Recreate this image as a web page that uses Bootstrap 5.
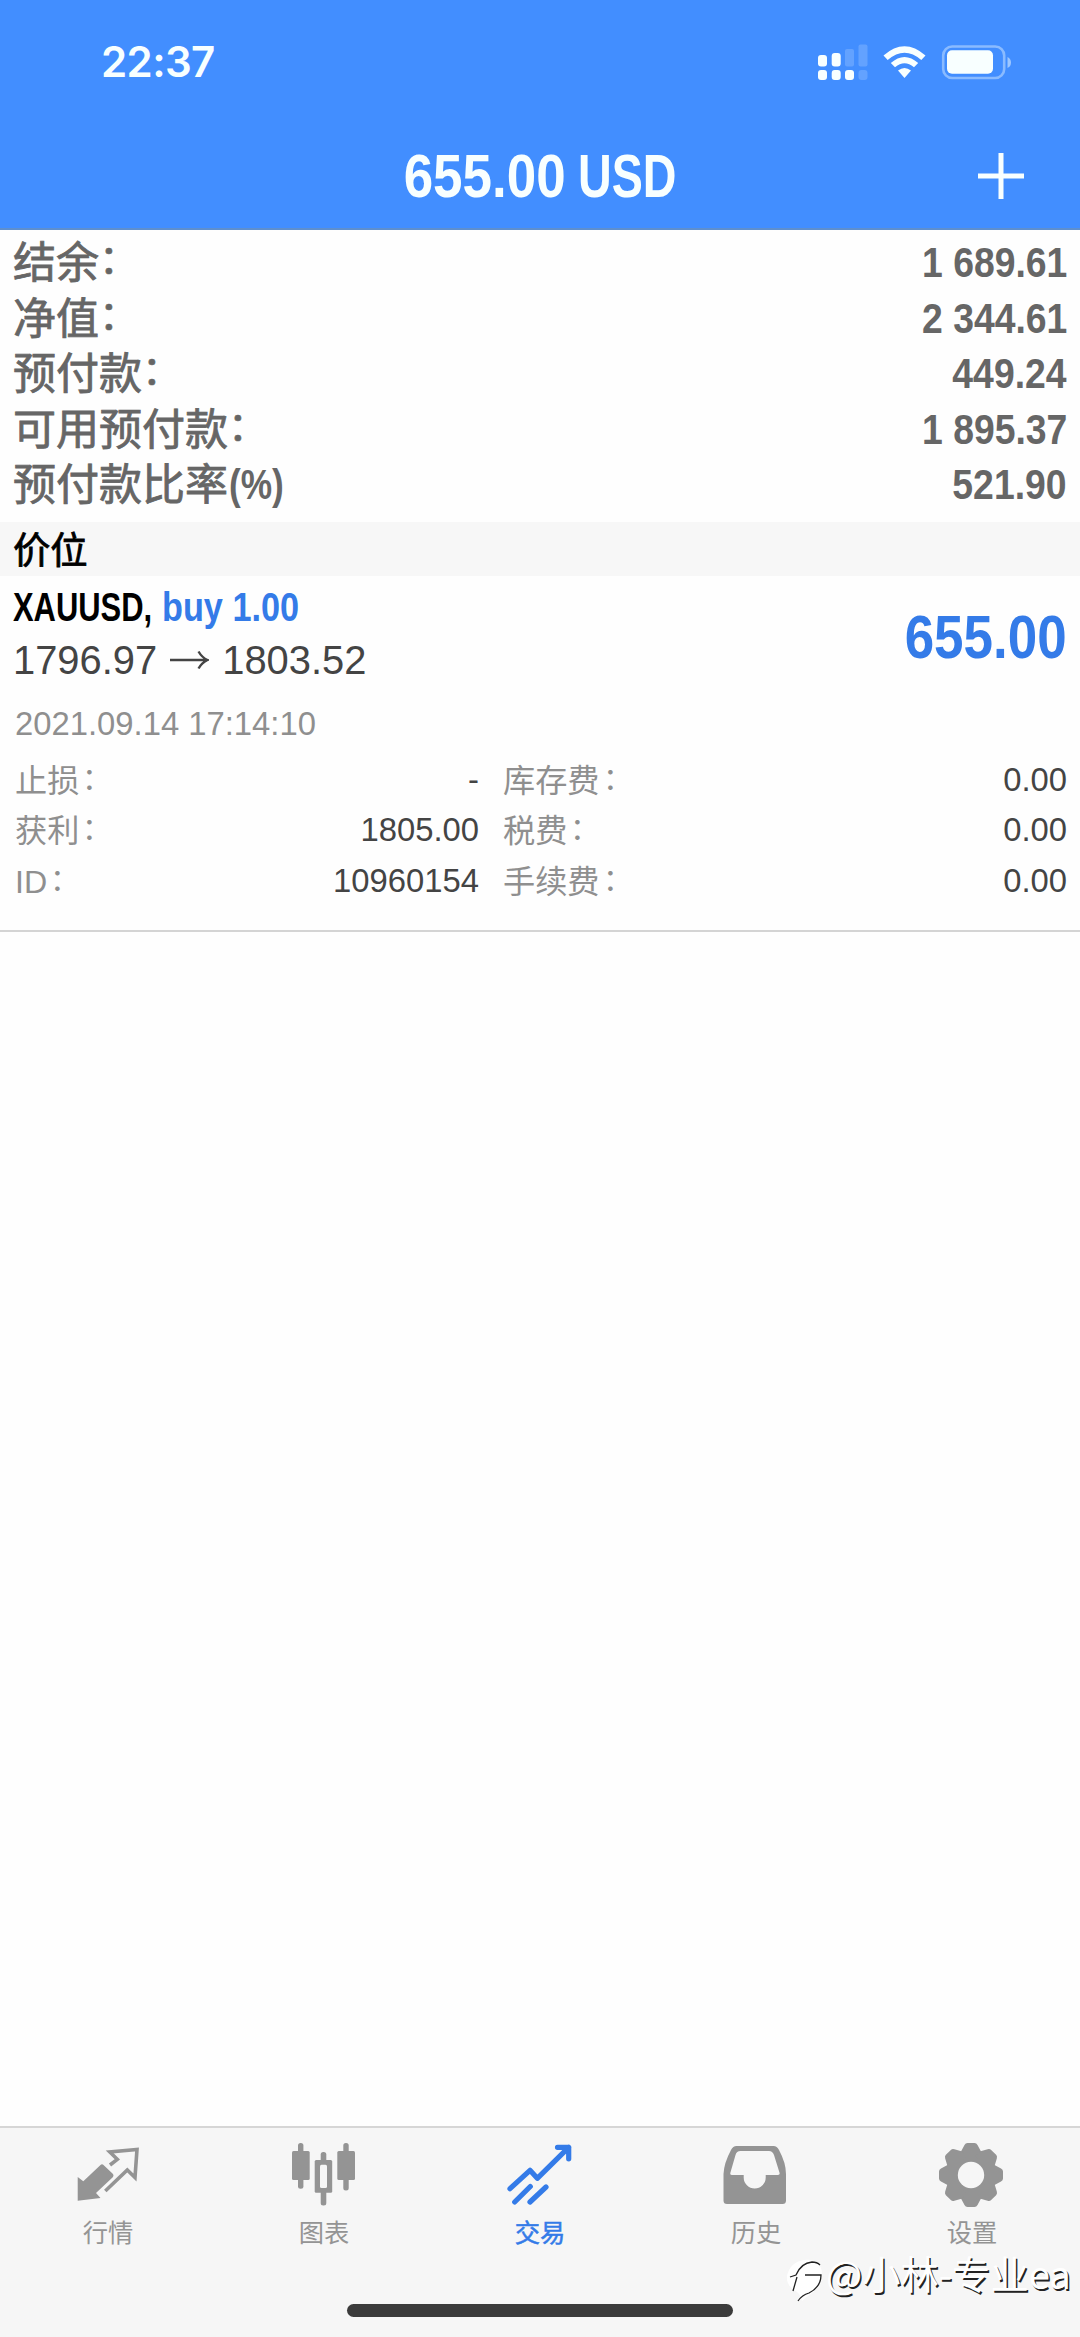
<!DOCTYPE html>
<html lang="zh-CN">
<head>
<meta charset="utf-8">
<meta name="viewport" content="width=device-width, initial-scale=1">
<title>交易</title>
<link href="https://cdn.jsdelivr.net/npm/bootstrap@5.3.0/dist/css/bootstrap.min.css" rel="stylesheet">
<style>
  body { font-family: "Liberation Sans", "Noto Sans CJK SC", sans-serif; background: #fefefe; color: #444; }
  .screen { width: 1080px; height: 2337px; overflow: hidden; }
  svg { display: block; }
  .app-head { height: 230px; background: #428eff; border-bottom: 2px solid #5e8fce; color: #f8ffff; }
  .status-line { height: 123px; padding: 0 69px 0 101px; }
  .clock { font: 600 42px/123px Inter, sans-serif; letter-spacing: -.6px; }
  .title-line { height: 105px; padding: 0 56px 0 0; }
  .title-side { width: 108px; }
  .title-main { font-size: 61px; line-height: 106px; gap: 13px; }
  .squeeze { display: inline-block; font-weight: 700; white-space: pre; transform: scaleX(.868); transform-origin: right; }
  .squeeze-l { transform-origin: left; }
  .narrow { transform: scaleX(.745); }
  .title-main .narrow { transform: scaleX(.765); }
  .lots { transform: scaleX(.825); margin-left: 1px; }
  .pct { transform: scaleX(.82); margin-left: 1px; }
  .totals { padding: 5px 13px 9px; color: #666; font-size: 43px; }
  .totals .line { height: 55.6px; line-height: 55.6px; }
  .label-bold { -webkit-text-stroke: .8px currentColor; }
  .totals .label-bold { padding-top: 1px; }
  .colon { display: inline-block; transform: translateY(-.08em) scale(.92); transform-origin: left center; }
  .band { height: 54px; background: #f7f7f7; color: #000; font-size: 37.3px; line-height: 58px; padding-left: 13px; }
  .deal { height: 356px; padding: 4px 13px 0; border-bottom: 2px solid #d4d4d4; }
  .deal-name { font-size: 41.5px; line-height: 53px; height: 53px; color: #000; }
  .deal-name .sym { width: 148px; }
  .blue { color: #347be8; }
  .deal-price { font-size: 39.9px; line-height: 54px; height: 54px; gap: 13px; }
  .profit { font-size: 61px; line-height: 70px; padding-top: 7px; }
  .deal-date { font-size: 32.8px; line-height: 54px; margin-top: 10px; padding-left: 2px; color: #8f8f8f; }
  .details { margin-top: 4px; font-size: 32.8px; line-height: 50.5px; }
  .details .tag { color: #8f8f8f; font-size: 32.2px; padding-top: 1px; margin-bottom: -1px; }
  .details .colon { margin-left: 3px; }
  .col-l { width: 466px; padding-left: 2px; }
  .col-r { margin-left: 24px; }
  .tabs { height: 211px; background: #f6f6f6; border-top: 2px solid #d6d6d6; color: #949494; }
  .tab { padding-top: 11px; width: 216px; }
  .tab-name { font-size: 25.3px; line-height: 36px; margin-top: 4px; }
  .tab-on { -webkit-text-stroke: .5px currentColor; }
  .home-bar { left: 347px; top: 2304px; width: 386px; height: 13px; border-radius: 7px; background: #3b3b3b; }
  .stamp { left: 785px; top: 2245px; height: 58px; color: #fff; font-family: "Noto Sans CJK SC", sans-serif; font-size: 38.3px; line-height: 56px; white-space: nowrap; text-shadow: 1.5px 1.5px 0 #222; }
</style>
</head>
<body>
<div class="screen position-relative d-flex flex-column">
  <header class="app-head flex-shrink-0">
    <div class="status-line d-flex justify-content-between align-items-center">
      <span class="clock">22:37</span>
      <svg width="193" height="36" viewBox="818 43 193 36" fill="#f8ffff">
        <g><rect x="818" y="54" width="9" height="11.500" rx="3"/><rect x="831.700" y="52" width="9" height="13.500" rx="3"/>
        <rect x="818" y="69" width="9" height="10" rx="3"/><rect x="831.700" y="69" width="9" height="10" rx="3"/><rect x="845" y="69" width="9" height="10" rx="3"/></g>
        <g opacity=".18"><rect x="845" y="48" width="9" height="17.500" rx="2"/><rect x="858.500" y="43.500" width="9" height="22" rx="2"/><rect x="858.500" y="69" width="9" height="10" rx="3"/></g>
        <path d="M883.500 54.500Q904.500 36 925.500 54.500L921.300 59Q904.500 44.500 887.700 59Z"/>
        <path d="M890.800 62Q904.500 50 918.200 62L914 66.300Q904.500 58 895 66.300Z"/>
        <path d="M898 69.500Q904.500 64.500 911 69.500L904.500 77Z"/>
        <rect x="943.200" y="45.500" width="61" height="31.500" rx="9" fill="none" stroke="#f8ffff" stroke-opacity=".4" stroke-width="2.600"/>
        <rect x="947" y="49.300" width="46" height="23.500" rx="5"/>
        <path d="M1007.500 56Q1011 57.500 1011 61.500T1007.500 67Z" opacity=".5"/>
      </svg>
    </div>
    <div class="title-line d-flex justify-content-between align-items-center">
      <div class="title-side"></div>
      <div class="title-main d-flex"><span class="squeeze">655.00</span><span class="squeeze squeeze-l narrow">USD</span></div>
      <svg width="46" height="46" viewBox="0 0 46 46" stroke="#f8ffff" stroke-width="5"><path d="M23 0V46M0 23H46"/></svg>
    </div>
  </header>

  <section class="totals flex-shrink-0">
    <div class="line d-flex justify-content-between"><span class="label-bold">结余<span class="colon">：</span></span><span class="squeeze">1 689.61</span></div>
    <div class="line d-flex justify-content-between"><span class="label-bold">净值<span class="colon">：</span></span><span class="squeeze">2 344.61</span></div>
    <div class="line d-flex justify-content-between"><span class="label-bold">预付款<span class="colon">：</span></span><span class="squeeze">449.24</span></div>
    <div class="line d-flex justify-content-between"><span class="label-bold">可用预付款<span class="colon">：</span></span><span class="squeeze">1 895.37</span></div>
    <div class="line d-flex justify-content-between"><span class="d-flex"><span class="label-bold">预付款比率</span><span class="squeeze squeeze-l pct">(%)</span></span><span class="squeeze">521.90</span></div>
  </section>

  <div class="band flex-shrink-0"><span class="label-bold">价位</span></div>

  <section class="deal flex-shrink-0">
    <div class="d-flex justify-content-between align-items-center">
      <div>
        <div class="deal-name d-flex"><span class="sym"><span class="squeeze squeeze-l narrow">XAUUSD,</span></span><span class="squeeze squeeze-l lots blue">buy 1.00</span></div>
        <div class="deal-price d-flex align-items-center"><span>1796.97</span>
          <svg width="39" height="20" viewBox="0 0 39 20" fill="none" stroke="#444" stroke-width="2.400"><path d="M0 10H37M28.500 1.500Q32 7.500 37.500 10Q32 12.500 28.500 18.500"/></svg>
          <span>1803.52</span></div>
      </div>
      <div class="profit"><span class="squeeze blue">655.00</span></div>
    </div>
    <div class="deal-date">2021.09.14 17:14:10</div>
    <div class="details d-flex">
      <div class="col-l">
        <div class="d-flex justify-content-between"><span class="tag">止损<span class="colon">：</span></span><span>-</span></div>
        <div class="d-flex justify-content-between"><span class="tag">获利<span class="colon">：</span></span><span>1805.00</span></div>
        <div class="d-flex justify-content-between"><span class="tag">ID<span class="colon">：</span></span><span>10960154</span></div>
      </div>
      <div class="col-r flex-grow-1">
        <div class="d-flex justify-content-between"><span class="tag">库存费<span class="colon">：</span></span><span>0.00</span></div>
        <div class="d-flex justify-content-between"><span class="tag">税费<span class="colon">：</span></span><span>0.00</span></div>
        <div class="d-flex justify-content-between"><span class="tag">手续费<span class="colon">：</span></span><span>0.00</span></div>
      </div>
    </div>
  </section>

  <nav class="tabs d-flex mt-auto flex-shrink-0">
    <div class="tab d-flex flex-column align-items-center">
      <svg width="72" height="72" viewBox="0 0 72 72" fill="#949494"><path d="M5.700 38L11.300 42.300L28.500 26Q30 24.500 31.500 26L41 35Q42 36.500 41 38L24 54L28.500 59L5.700 61.700Z"/><path d="M38 26L45.300 20.300L37.800 13L65 10.500L63 38.500L55.300 31L33.300 52" fill="none" stroke="#949494" stroke-width="3.600"/></svg>
      <span class="tab-name">行情</span>
    </div>
    <div class="tab d-flex flex-column align-items-center">
      <svg width="72" height="72" viewBox="0 0 72 72" fill="#949494"><rect x="4" y="12" width="17.700" height="29" rx="1.500"/><rect x="10" y="4" width="5.400" height="45.700" rx="2.500"/><rect x="49.300" y="12" width="17.700" height="29" rx="1.500"/><rect x="55.300" y="4" width="5.400" height="47.500" rx="2.500"/><rect x="32.700" y="13" width="5.600" height="53.500" rx="2.500"/><rect x="26.700" y="21" width="17.500" height="32.700" rx="1.500"/><rect x="32" y="25.700" width="7" height="23.300" rx="1.500" fill="#f6f6f6"/></svg>
      <span class="tab-name">图表</span>
    </div>
    <div class="tab d-flex flex-column align-items-center blue">
      <svg width="72" height="72" viewBox="0 0 72 72" fill="none" stroke="#347be8" stroke-width="5.200" stroke-linecap="round" stroke-linejoin="round"><path d="M6 49.700L26 31.300L33.300 39.300L64.700 8.300M53.500 8.300H64.700V19.800M10.700 63L26.300 47.500M26 63L42 48"/></svg>
      <span class="tab-name tab-on">交易</span>
    </div>
    <div class="tab d-flex flex-column align-items-center">
      <svg width="72" height="72" viewBox="0 0 72 72" fill="#949494"><path fill-rule="evenodd" d="M16.500 7H53.500Q57 7 59 11Q66 24 66 35V61.500Q66 65 62.500 65H7Q3.500 65 3.500 61.500V35Q4 24 11 11Q13 7 16.500 7ZM20.500 12Q16.500 12 15.500 16L10.300 34Q10 36 12 36H23.700V38.500A11 11 0 0 0 45.700 38.500V36H58Q60 36 59.600 34L54 16Q52.500 12 49 12Z"/></svg>
      <span class="tab-name">历史</span>
    </div>
    <div class="tab d-flex flex-column align-items-center">
      <svg width="72" height="72" viewBox="0 0 72 72" fill="#949494"><defs><path id="tooth" d="M25 12.500L28.500 6Q29.500 4 31.500 4H38.500Q40.500 4 41.500 6L45 12.500V20H25Z"/></defs><circle cx="35" cy="36" r="25"/><g><use href="#tooth"/><use href="#tooth" transform="rotate(45 35 36)"/><use href="#tooth" transform="rotate(90 35 36)"/><use href="#tooth" transform="rotate(135 35 36)"/><use href="#tooth" transform="rotate(180 35 36)"/><use href="#tooth" transform="rotate(225 35 36)"/><use href="#tooth" transform="rotate(270 35 36)"/><use href="#tooth" transform="rotate(315 35 36)"/></g><circle cx="35" cy="36" r="13.200" fill="#f6f6f6"/></svg>
      <span class="tab-name">设置</span>
    </div>
  </nav>

  <div class="home-bar position-absolute"></div>
  <div class="stamp position-absolute d-flex align-items-start">
    <svg class="mt-1" width="41" height="56" viewBox="0 0 41 56"><path d="M19 11C31 9 38 16 37 28C36 40 26 44 17 52Q16 46 12 43Q1 37 2 27Q5 13 19 11Z" fill="#fff"/><path d="M5 28L11 26Q16 14 27 13Q32 13 35 16M8 42L12 28M20 26H36Q36 38 24 44Q17 46 13 52" fill="none" stroke="#222" stroke-width="1.300"/></svg>
    <span>@小林-专业ea</span>
  </div>
</div>
<script src="https://cdn.jsdelivr.net/npm/bootstrap@5.3.0/dist/js/bootstrap.bundle.min.js"></script>
</body>
</html>
